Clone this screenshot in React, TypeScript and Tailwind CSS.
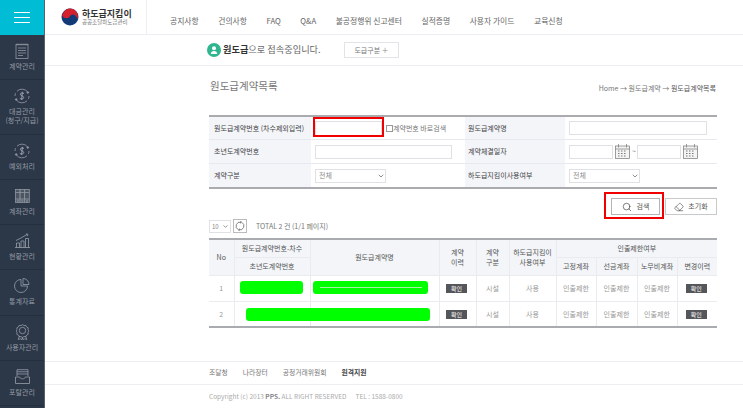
import React from 'react';
import { ChevronDown, Eraser, Search } from 'lucide-react';

const FONT = "font-['Noto_Sans_CJK_KR','Noto_Sans',sans-serif]";

const IconNote = () => (
  <svg width="14" height="16" viewBox="0 0 14 16" fill="none" stroke="#8f97a2" strokeWidth="0.8">
    <rect x="1" y="1.5" width="12" height="14" />
    <path d="M2 .5v2M4 .5v2M6 .5v2M8 .5v2M10 .5v2M12 .5v2M3 5h8M3 7.5h8M3 10h8M3 12.5h5" />
  </svg>
);

const IconDollar = () => (
  <svg width="16" height="16" viewBox="0 0 16 16" fill="none" stroke="#969ea8" strokeWidth="0.8">
    <path d="M3 3.200A7 7 0 0 1 13.600 4M13 12.800A7 7 0 0 1 2.400 12M1 8a7 7 0 0 1 .6-2.800M15 8a7 7 0 0 1-.6 2.800" />
    <circle cx="2.200" cy="11.500" r="0.8" fill="#969ea8" />
    <circle cx="13.800" cy="4.500" r="0.8" fill="#969ea8" />
    <path d="M10 5.500C9 4.600 6.400 4.700 6.300 6.200 6.200 8 9.800 7.600 9.700 9.600 9.600 11.200 7 11.400 5.800 10.400M8.400 3.800 7.600 12" strokeWidth="1" />
  </svg>
);

const IconBinders = () => (
  <svg width="15" height="14" viewBox="0 0 15 14" fill="none" stroke="#8f97a2" strokeWidth="0.8">
    <rect x="0.5" y="0.5" width="4.600" height="13" fill="#4c5562" />
    <rect x="5.100" y="0.5" width="4.600" height="13" fill="#4c5562" />
    <rect x="9.700" y="0.5" width="4.600" height="13" fill="#4c5562" />
    <path d="M.5 3.500h13.800M.5 10h13.800" />
    <circle cx="2.800" cy="11.800" r="0.8" />
    <circle cx="7.400" cy="11.800" r="0.8" />
    <circle cx="12" cy="11.800" r="0.8" />
  </svg>
);

const IconChart = () => (
  <svg width="15" height="15" viewBox="0 0 15 15" fill="none" stroke="#969ea8" strokeWidth="0.8">
    <path d="M0 14.500h15M1.500 14.500V10h3v4.500M6 14.500V8h3v6.500M10.500 14.500V5.500h3v9" />
    <path d="M1 7.500 6 5l6-3.500M10.800 1l2.200.2-.8 2" />
  </svg>
);

const IconPie = () => (
  <svg width="16" height="15" viewBox="0 0 16 15" fill="none" stroke="#969ea8" strokeWidth="0.8">
    <path d="M7 1.500a6.500 6.500 0 1 0 6.500 6.500H7z" />
    <path d="M9 .5a6 6 0 0 1 6 6H9z" />
  </svg>
);

const IconBadge = () => (
  <svg width="13" height="16" viewBox="0 0 13 16" fill="none" stroke="#969ea8" strokeWidth="0.8">
    <path d="M6.500.6 8 1.600l1.800-.2.8 1.600 1.600.8-.2 1.800 1 1.400-1 1.500.2 1.800-1.600.8-.8 1.600-1.800-.2-1.500 1-1.500-1-1.800.2-.8-1.600-1.600-.8.2-1.800-1-1.500 1-1.400-.2-1.800 1.600-.8.8-1.600 1.800.2z" />
    <circle cx="6.500" cy="6.500" r="3.200" />
    <path d="M3.500 12 2.200 15.500l2.400-.7L6 15.600l.5-2.200.5 2.200 1.400-.8 2.400.7L9.500 12" />
  </svg>
);

const IconTray = () => (
  <svg width="15" height="15" viewBox="0 0 15 15" fill="none" stroke="#969ea8" strokeWidth="0.8">
    <path d="M2 7V.7h11V7M2 2.800h11M2 5h11" />
    <path d="M.5 8h4.200c.3 1.200 1.200 1.800 2.800 1.800S10 9.200 10.300 8h4.200v6.500H.5z" />
  </svg>
);

const menuItems = [
  { label: ['계약관리'], icon: <IconNote />, height: 'h-[45px]' },
  { label: ['대금관리', '(청구/지급)'], icon: <IconDollar />, height: 'h-[55px]' },
  { label: ['예외처리'], icon: <IconDollar />, height: 'h-[45px]' },
  { label: ['계좌관리'], icon: <IconBinders />, height: 'h-[45px]' },
  { label: ['현황관리'], icon: <IconChart />, height: 'h-[45px]' },
  { label: ['통계자료'], icon: <IconPie />, height: 'h-[46px]' },
  { label: ['사용자관리'], icon: <IconBadge />, height: 'h-[45px]' },
  { label: ['포탈관리'], icon: <IconTray />, height: 'h-[45px]' },
];

const navItems = ['공지사항', '건의사항', 'FAQ', 'Q&A', '불공정행위 신고센터', '실적증명', '사용자 가이드', '교육신청'];

const CalendarIcon = () => (
  <svg width="15" height="15" viewBox="0 0 15 15" fill="none" stroke="#777" strokeWidth="0.7">
    <rect x="0.5" y="2" width="14" height="12.500" fill="#f4f4f4" />
    <path d="M3.500 0v3.500M11.500 0v3.500M.5 5h14" />
    <path d="M3 7h9M3 9.500h9M3 12h9" strokeDasharray="1.500 1.500" strokeWidth="1.200" />
  </svg>
);

const FakeSelect = ({ width }: { width: string }) => (
  <div className={`${width} h-[14px] border border-[#dfe1e5] bg-white flex items-center justify-between pl-[3px] text-[7px] text-[#888]`}>
    <span>전체</span>
    <ChevronDown size={8} strokeWidth={2} color="#555" />
  </div>
);

const labelCls = 'bg-[#f3f5f9] text-[7px] text-[#444] pl-[5px]';
const labelRightCls = 'bg-[#f3f5f9] text-[7px] text-[#444] pl-[3px]';

function SearchForm() {
  return (
    <div className="relative border-t-2 border-b-2 border-[#a9abae] grid grid-cols-[102px_154px_100px_152px] grid-rows-[23px_24px_23px]">
      <div className={`${labelCls} flex items-center border-b border-[#e6e9ef]`}>원도급계약번호 (차수제외입력)</div>
      <div className="flex items-center border-b border-[#e6e9ef] pl-[4px] gap-[4px]">
        <div className="w-[67px] h-[15px] border border-[#dfe1e5]" />
        <div className="w-[7px] h-[7px] border border-[#999]" />
        <span className="-ml-[4px] text-[7px] text-[#777] whitespace-nowrap">계약번호 바로검색</span>
      </div>
      <div className={`${labelRightCls} flex items-center border-b border-[#e6e9ef]`}>원도급계약명</div>
      <div className="flex items-center border-b border-[#e6e9ef] pl-[4px]">
        <div className="w-[138px] h-[14px] border border-[#dfe1e5]" />
      </div>

      <div className={`${labelCls} flex items-center border-b border-[#e6e9ef]`}>초년도계약번호</div>
      <div className="flex items-center border-b border-[#e6e9ef] pl-[4px]">
        <div className="w-[137px] h-[14px] border border-[#dfe1e5]" />
      </div>
      <div className={`${labelRightCls} flex items-center border-b border-[#e6e9ef]`}>계약체결일자</div>
      <div className="flex items-center border-b border-[#e6e9ef] pl-[4px] gap-[2px]">
        <div className="w-[44px] h-[14px] border border-[#dfe1e5]" />
        <CalendarIcon />
        <span className="w-[3px] text-[7px] text-[#777]">~</span>
        <div className="w-[44px] h-[14px] border border-[#dfe1e5]" />
        <CalendarIcon />
      </div>

      <div className={`${labelCls} flex items-center`}>계약구분</div>
      <div className="flex items-center pl-[4px]">
        <FakeSelect width="w-[71px]" />
      </div>
      <div className={`${labelRightCls} flex items-center`}>하도급지킴이사용여부</div>
      <div className="flex items-center pl-[4px]">
        <FakeSelect width="w-[71px]" />
      </div>

      {/* 강조 표시 */}
      <div className="absolute left-[104px] top-[0px] w-[71px] h-[20px] border-[2px] border-[#f00000]" />
    </div>
  );
}

function Actions() {
  return (
    <div className="relative flex justify-end gap-[5px] mt-[9px] h-[17px]">
      <button className="w-[49px] h-[17px] border border-[#b5b5b5] flex items-center justify-center gap-[5px] text-[7px] text-[#555]">
        <Search size={10} strokeWidth={1.5} color="#333" />
        검색
      </button>
      <button className="w-[52px] h-[17px] border border-[#c9c9c9] flex items-center justify-center gap-[4px] text-[7px] text-[#555]">
        <Eraser size={10} strokeWidth={1.3} color="#333" />
        초기화
      </button>
      <div className="absolute right-[53px] -top-[6px] w-[60px] h-[27px] border-[2px] border-[#f00000]" />
    </div>
  );
}

function ListControls() {
  return (
    <div className="flex items-center h-[14px] mt-[4px]">
      <div className="w-[22px] h-[13px] border border-[#dfe1e5] flex items-center justify-between pl-[2px] pr-[1px] text-[6px] text-[#888]">
        <span>10</span>
        <ChevronDown size={7} strokeWidth={2} color="#555" />
      </div>
      <div className="w-[14px] h-[14px] border border-[#bbb] ml-[2px] flex items-center justify-center">
        <svg width="10" height="10" viewBox="0 0 10 10" fill="none" stroke="#666" strokeWidth="0.8">
          <path d="M6 1.200A4 4 0 0 0 3 8.500M4 8.800A4 4 0 0 0 7 1.500M5.500 0 6.500 1.300 5 2.200M4.500 10 3.500 8.700 5 7.800" />
        </svg>
      </div>
      <span className="ml-[9px] text-[7px] text-[#777]">TOTAL 2 건 (1/1 페이지)</span>
    </div>
  );
}

const thCls = 'border-l border-[#e9ebef] font-normal text-[7px] leading-[10px] text-[#555] bg-[#f3f5f9] text-center align-middle p-0';
const tdCls = 'border-l border-[#e9ebef] text-center text-[7px] text-[#999] p-0';

const Confirm = () => (
  <span className="inline-block -ml-[2px] w-[21px] h-[9px] leading-[9px] bg-[#55565a] text-white text-[6px] text-center align-middle">확인</span>
);

function ResultTable() {
  const rows = ['1', '2'];
  return (
    <div className="relative mt-[5px]">
      <table className="w-[508px] table-fixed border-collapse border-t-2 border-b-2 border-[#a9abae]">
        <colgroup>
          <col className="w-[25px]" />
          <col className="w-[76px]" />
          <col className="w-[129px]" />
          <col className="w-[37px]" />
          <col className="w-[33px]" />
          <col className="w-[47px]" />
          <col className="w-[40px]" />
          <col className="w-[41px]" />
          <col className="w-[40px]" />
          <col className="w-[40px]" />
        </colgroup>
        <thead>
          <tr className="h-[18px]">
            <th rowSpan={2} className={`${thCls} !border-l-0`}>No</th>
            <th className={`${thCls} border-b border-[#e9ebef]`}>원도급계약번호-차수</th>
            <th rowSpan={2} className={thCls}>원도급계약명</th>
            <th rowSpan={2} className={thCls}>계약<br />이력</th>
            <th rowSpan={2} className={thCls}>계약<br />구분</th>
            <th rowSpan={2} className={thCls}>하도급지킴이<br />사용여부</th>
            <th colSpan={4} className={`${thCls} border-b border-[#e9ebef]`}>인출제한여부</th>
          </tr>
          <tr className="h-[18px]">
            <th className={thCls}>초년도계약번호</th>
            <th className={thCls}>고정계좌</th>
            <th className={thCls}>선금계좌</th>
            <th className={thCls}>노무비계좌</th>
            <th className={thCls}>변경이력</th>
          </tr>
        </thead>
        <tbody>
          {rows.map((no) => (
            <tr key={no} className="h-[26px] border-t border-[#e9ebef]">
              <td className={`${tdCls} !border-l-0`}>{no}</td>
              <td className={tdCls} />
              <td className={tdCls} />
              <td className={tdCls}><Confirm /></td>
              <td className={tdCls}>시설</td>
              <td className={tdCls}>사용</td>
              <td className={tdCls}>인출제한</td>
              <td className={tdCls}>인출제한</td>
              <td className={tdCls}>인출제한</td>
              <td className={tdCls}><Confirm /></td>
            </tr>
          ))}
        </tbody>
      </table>
      {/* 가림 처리 */}
      <div className="absolute left-[31px] top-[43px] w-[63px] h-[13px] rounded-[3px] bg-[#00ff00]" />
      <div className="absolute left-[104px] top-[43px] w-[115px] h-[13px] rounded-[3px] bg-[#00ff00] flex items-center justify-center">
        <div className="w-[102px] h-px bg-[#a8f0a8]" />
      </div>
      <div className="absolute left-[37px] top-[70px] w-[184px] h-[13px] rounded-[3px] bg-[#00ff00]" />
    </div>
  );
}

export default function App() {
  return (
    <div className={`${FONT} flex w-[743px] h-[408px] overflow-hidden bg-white`}>
      <aside className="w-[45px] shrink-0 bg-[#2c3748] border-r border-[#59616d] flex flex-col">
        <div className="h-[35px] bg-[#00bcd4] flex flex-col items-center justify-center gap-[4px]">
          <div className="w-[16px] h-px bg-white" />
          <div className="w-[16px] h-px bg-white" />
          <div className="w-[16px] h-px bg-white" />
        </div>
        {menuItems.map((item) => (
          <div key={item.label[0]} className={`${item.height} shrink-0 border-b border-[#252f3e] flex flex-col items-center pt-[7px]`}>
            <div className="h-[17px] flex items-center justify-center">{item.icon}</div>
            <div className="mt-[3px] text-[7px] leading-[9px] text-[#969da7] text-center whitespace-nowrap">
              {item.label.map((line) => (
                <div key={line}>{line}</div>
              ))}
            </div>
          </div>
        ))}
      </aside>

      <div className="flex-1 flex flex-col min-w-0">
        <header className="h-[35px] shrink-0 border-b border-[#eceef2] flex">
          <div className="w-[102px] border-r border-[#eceef2] flex items-center pl-[16px] gap-[3px]">
            <svg width="18" height="18" viewBox="0 0 18 18">
              <circle cx="9" cy="9" r="8.500" fill="#123a77" />
              <path d="M1 7.500C2.500 3 6 .5 9 .5c4.500 0 8 3.500 8 8.500 0 1-.2 1.500-.5 2-1-3.500-3.500-5-5.500-4.500C9 7 9 9.500 7 10 4.500 10.500 2 9.500 1 7.500z" fill="#d5202d" />
            </svg>
            <div className="flex flex-col">
              <span className="text-[9px] leading-[11px] font-bold text-[#333] whitespace-nowrap">하도급지킴이</span>
              <span className="text-[5.500px] leading-[7px] text-[#777] whitespace-nowrap">공공조달하도급관리</span>
            </div>
          </div>
          <nav className="flex items-center gap-[19.500px] pl-[23px] pt-[8px] text-[7.800px] text-[#666] whitespace-nowrap">
            {navItems.map((item) => (
              <span key={item}>{item}</span>
            ))}
          </nav>
        </header>

        <div className="h-[31px] shrink-0 border-b border-[#eceef2] flex items-center pl-[162px]">
          <div className="w-[14px] h-[14px] rounded-full bg-[#2fb58f] flex items-center justify-center">
            <svg width="8" height="8" viewBox="0 0 8 8" fill="white">
              <circle cx="4" cy="2.300" r="2" />
              <path d="M.8 8c0-2 1.400-3 3.200-3s3.200 1 3.200 3z" />
            </svg>
          </div>
          <span className="ml-[2px] text-[9.200px] text-[#666] whitespace-nowrap">
            <b className="text-[#333]">원도급</b>으로 접속중입니다.
          </span>
          <div className="ml-[23px] w-[55px] h-[16px] border border-[#e2e4e8] flex items-center justify-center text-[7px] text-[#777] whitespace-nowrap">
            도급구분 <span className="ml-[2px] text-[10px] leading-none text-[#aaa]">+</span>
          </div>
        </div>

        <main className="flex-1 min-h-0 pl-[164px] w-[672px]">
          <div className="flex items-end justify-between h-[28px]">
            <h1 className="pl-[1px] text-[10.500px] leading-[16px] font-normal text-[#777]">원도급계약목록</h1>
            <span className="text-[7px] leading-[12px] text-[#777] pr-[1px] whitespace-nowrap">
              Home → 원도급계약 → <span className="text-[#555]">원도급계약목록</span>
            </span>
          </div>
          <div className="mt-[21px]">
            <SearchForm />
            <Actions />
            <ListControls />
            <ResultTable />
          </div>
        </main>

        <footer className="shrink-0 h-[47px]">
          <div className="h-[24px] border-t border-b border-[#eceef2] flex items-center gap-[15px] pb-[1px] pl-[164px] text-[6.800px] text-[#777] whitespace-nowrap">
            <span>조달청</span>
            <span>나라장터</span>
            <span>공정거래위원회</span>
            <span className="text-[#444] font-bold">원격지원</span>
          </div>
          <div className="h-[23px] flex items-center pl-[164px] text-[6.500px] text-[#aaa] whitespace-nowrap">
            Copyright (c) 2013&nbsp;<b className="text-[#888]">PPS.</b>&nbsp;ALL RIGHT RESERVED
            <span className="ml-[9px]">TEL : 1588-0800</span>
          </div>
        </footer>
      </div>
    </div>
  );
}
